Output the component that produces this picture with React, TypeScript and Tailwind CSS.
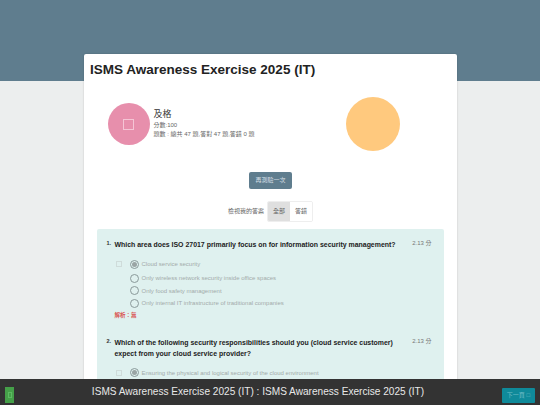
const font = { fontFamily: '"Liberation Sans", "Noto Sans CJK TC", sans-serif' };

function Radio({ checked }: { checked?: boolean }) {
  return (
    <span className="flex h-[9px] w-[9px] shrink-0 items-center justify-center rounded-full border border-[#8a9a9a]">
      {checked && <span className="h-[5px] w-[5px] rounded-full bg-[#9aa5a5]" />}
    </span>
  );
}

function Option({ text, checked, box, first }: { text: string; checked?: boolean; box?: boolean; first?: boolean }) {
  return (
    <div className={first ? "mb-[1.5px] flex h-[12.5px] items-center" : "flex h-[12.5px] items-center"}>
      <span className="flex w-[15px] shrink-0 pl-[1px]">
        {box && <span className="h-[6px] w-[6px] border border-[#cfdcda]" />}
      </span>
      <Radio checked={checked} />
      <span className="ml-[3px] text-[6px] leading-none text-[#a3abaa]">{text}</span>
    </div>
  );
}

function Question({ no, title, children }: { no: string; title: React.ReactNode; children: React.ReactNode }) {
  return (
    <div className="flex">
      <span className="w-[8px] shrink-0 text-[5.5px] font-bold leading-[9px] text-[#333]">{no}</span>
      <div className="flex-1">
        <div className="flex justify-between">
          <p className="w-[284px] text-[6.95px] font-bold leading-[11px] text-[#222]">{title}</p>
          <span className="pr-[6px] text-[6px] leading-[9px] text-[#777]">2.13 分</span>
        </div>
        <div className="mt-[8px]">{children}</div>
      </div>
    </div>
  );
}

export default function App() {
  return (
    <div className="relative h-[405px] w-[540px] overflow-hidden bg-[#eceeee]" style={font}>
      <div className="h-[81px] bg-[#5f7d8e]" />
      <div className="mx-auto mt-[-27px] h-[351px] w-[373px] rounded-t-[2px] bg-white pl-[6px] pr-[13px] pt-[7px] shadow-[0_0_2px_rgba(0,0,0,0.2)]">
        <h1 className="pl-[0.5px] text-[13.5px] font-bold leading-[17px] text-[#222]">ISMS Awareness Exercise 2025 (IT)</h1>

        <div className="mt-[19px] flex h-[54px]">
          <div className="flex w-[256px] items-center pl-[18px]">
            <div className="flex h-[42px] w-[42px] shrink-0 items-center justify-center rounded-full bg-[#e78fac]">
              <span className="h-[11px] w-[11px] border border-[#f5c5d5]" />
            </div>
            <div className="ml-[4px]">
              <div className="text-[9px] leading-[11px] text-[#333]">及格</div>
              <div className="mt-[1px] text-[6px] leading-[9px] text-[#666]">分數:100</div>
              <div className="text-[6px] leading-[9px] text-[#666]">題數 : 總共 47 題,答對 47 題,答錯 0 題</div>
            </div>
          </div>
          <div className="h-[54px] w-[54px] rounded-full bg-[#ffc97e]" />
        </div>

        <div className="mt-[21px] flex justify-center pl-[8px]">
          <button className="h-[17px] w-[43px] rounded-[2px] bg-[#5f7d8e] text-[6px] text-[#d5dfe4]">再測驗一次</button>
        </div>

        <div className="mt-[12px] flex items-center justify-center pl-[8px]">
          <span className="mr-[3px] text-[6px] text-[#666]">檢視我的答案</span>
          <div className="flex h-[21px] overflow-hidden rounded-[2px] border border-[#eeeeee] text-[6px] text-[#666]">
            <span className="flex w-[22px] items-center justify-center bg-[#dfdfdf]">全部</span>
            <span className="flex w-[22px] items-center justify-center bg-white">答錯</span>
          </div>
        </div>

        <div className="mt-[7px] ml-[7px] h-[160px] w-[347px] rounded-t-[2px] bg-[#dff1ef] pl-[10px] pr-[6px] pt-[10px]">
          <Question no="1." title="Which area does ISO 27017 primarily focus on for information security management?">
            <Option first box checked text="Cloud service security" />
            <Option text="Only wireless network security inside office spaces" />
            <Option text="Only food safety management" />
            <Option text="Only internal IT infrastructure of traditional companies" />
          </Question>
          <div className="ml-[8px] mt-[1px] text-[5.5px] font-bold leading-[8px] text-[#d9534f]">解析：無</div>
          <div className="mt-[18px]">
            <Question no="2." title="Which of the following security responsibilities should you (cloud service customer) expect from your cloud service provider?">
              <Option box checked text="Ensuring the physical and logical security of the cloud environment" />
            </Question>
          </div>
        </div>
      </div>

      <div className="fixed inset-x-0 bottom-0 flex h-[26px] justify-between bg-[#333333] pb-[2px] pl-[5px] pr-[5px]">
        <span className="mt-auto flex h-[16px] w-[9px] items-center justify-center bg-[#45a049]">
          <span className="h-[6px] w-[4px] border border-[#5dbb62]" />
        </span>
        <span className="mt-[2px] self-center text-[10.1px] text-[#e8e8e8]">ISMS Awareness Exercise 2025 (IT) : ISMS Awareness Exercise 2025 (IT)</span>
        <button className="mt-auto h-[15px] w-[33px] rounded-[1px] bg-[#0f8a9a] text-[6px] text-[#6fbcc7]">下一頁 □</button>
      </div>
    </div>
  );
}
